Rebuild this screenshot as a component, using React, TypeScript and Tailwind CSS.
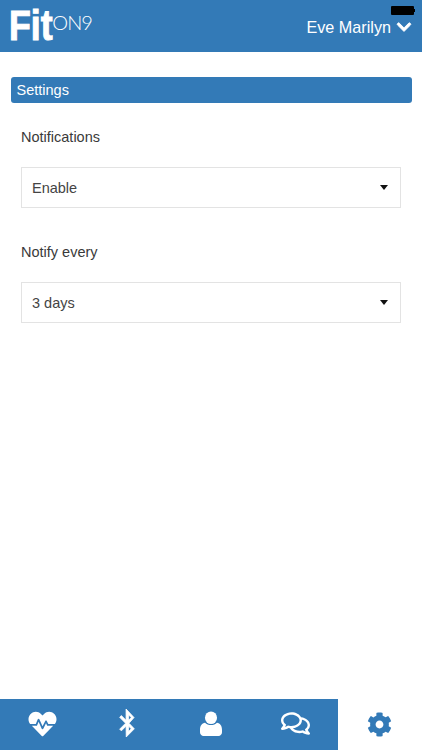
import { FaBluetoothB, FaChevronDown, FaCog, FaHeartbeat, FaRegComments } from 'react-icons/fa'

const FONT = "font-['Liberation_Sans',Arial,sans-serif]"

function SelectBox({ value }: { value: string }) {
  return (
    <div className="mt-[20px] flex h-[41px] items-center justify-between border border-[#e3e3e3] bg-white pl-[10px] pr-[12px] text-[14.5px] text-[#444]">
      <span className="pt-[2px]">{value}</span>
      <span className="h-0 w-0 border-x-[4.5px] border-t-[5px] border-x-transparent border-t-[#111]" />
    </div>
  )
}

function Field({ label, value }: { label: string; value: string }) {
  return (
    <div>
      <div className="text-[14.5px] leading-[20px] text-[#3a3a3a]">{label}</div>
      <SelectBox value={value} />
    </div>
  )
}

// older bust-style user glyph, the package one has a narrower neck
function UserIcon() {
  return (
    <svg viewBox="0 0 24 26" className="h-[25px] w-[22px]" fill="currentColor" preserveAspectRatio="none">
      <circle cx="12" cy="7" r="6.6" />
      <path d="M5.5 12.2c1.6 1.5 3.9 2.4 6.5 2.4s4.900-.9 6.500-2.400c3.300.5 5.500 3 5.500 7.300v2.700c0 2.200-1.700 3.800-3.800 3.800H3.800C1.700 26 0 24.400 0 22.200v-2.700c0-4.300 2.200-6.800 5.500-7.300z" />
    </svg>
  )
}

export default function App() {
  return (
    <div className={`${FONT} relative flex h-[750px] w-[422px] flex-col overflow-hidden bg-white`}>
      {/* battery from the phone status bar */}
      <div className="absolute right-[7px] top-[6px] flex items-center">
        <div className="h-[9px] w-[23px] rounded-[1px] bg-black" />
        <div className="h-[3px] w-[1px] bg-black" />
      </div>

      <header className="flex h-[52px] shrink-0 items-center justify-between bg-[#337ab7] pl-[9px] pr-[10px] text-white">
        <div className="flex items-center">
          <span className="origin-left scale-x-[0.85] text-[42px] font-bold leading-[52px] [-webkit-text-stroke:1px_white]">Fit</span>
          <span className="-ml-[8px] -translate-y-[4px] font-['Lato',sans-serif] text-[20px] font-light leading-none tracking-[-1px]">ON9</span>
        </div>
        <div className="flex items-center gap-[5px] pt-[2px] text-[16.2px]">
          <span>Eve Marilyn</span>
          <FaChevronDown className="h-[16px] w-[16px]" stroke="currentColor" strokeWidth={30} />
        </div>
      </header>

      <main className="flex-1 px-[10.5px] pt-[25px]">
        <div className="flex h-[26px] items-center rounded-[3px] bg-[#337ab7] pl-[6px] pt-[1px] text-[14.5px] text-white">Settings</div>
        <div className="flex flex-col gap-[34px] px-[10.5px] pt-[24px]">
          <Field label="Notifications" value="Enable" />
          <Field label="Notify every" value="3 days" />
        </div>
      </main>

      <nav className="grid h-[51px] shrink-0 grid-cols-[84.5px_84.5px_84.5px_84.5px_84px] bg-[#337ab7] text-white">
        <div className="flex items-center justify-center pb-[2px]"><FaHeartbeat className="h-[28px] w-[29px]" /></div>
        <div className="flex items-center justify-center pb-[3px]"><FaBluetoothB className="h-[28px] w-[28px]" stroke="currentColor" strokeWidth={14} /></div>
        <div className="flex items-center justify-center pb-[2px]"><UserIcon /></div>
        <div className="flex items-center justify-center pb-[3px]"><FaRegComments className="h-[27px] w-[29px]" /></div>
        <div className="flex items-center justify-center bg-white pr-[2px] text-[#337ab7]"><FaCog className="h-[25px] w-[25px]" /></div>
      </nav>
    </div>
  )
}
